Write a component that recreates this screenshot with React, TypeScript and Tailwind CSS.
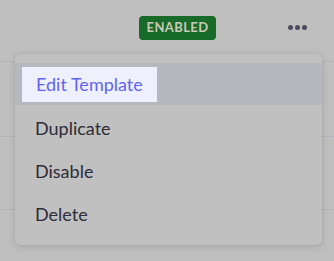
const ITEMS = ['Duplicate', 'Disable', 'Delete'];

export default function App() {
  return (
    <div
      className="relative w-[334px] h-[261px] overflow-hidden bg-[#bfbfbf]"
      style={{ fontFamily: 'Lato, "Open Sans", sans-serif' }}
    >
      {/* table rows behind the menu */}
      <div className="flex items-center h-[62px] pl-[139px] border-b border-[#b3b3c1]">
        <span className="mb-[6px] h-[24px] w-[77px] flex items-center justify-center rounded-[4px] bg-[#186a28] text-[13px] font-bold tracking-[0.03em] text-[#c9c9b6]">
          ENABLED
        </span>
        <div className="ml-[72px] mb-[6px] flex gap-[2px]">
          <span className="w-[5px] h-[5px] rounded-full bg-[#4b4b5c]" />
          <span className="w-[5px] h-[5px] rounded-full bg-[#4b4b5c]" />
          <span className="w-[5px] h-[5px] rounded-full bg-[#4b4b5c]" />
        </div>
      </div>
      <div className="h-[75px] border-b border-[#b3b3c1]" />
      <div className="h-[73px] border-b border-[#b3b3c1]" />

      {/* dropdown menu */}
      <div className="absolute left-[15px] top-[54px] w-[307px] rounded-[5px] bg-[#c0c0c0] pt-[9px] pb-[9px] shadow-[0_2px_8px_rgba(0,0,0,0.12),0_0_2px_rgba(0,0,0,0.08)]">
        <div className="h-[42px] bg-[#b6b7bf] flex items-center pl-[7px]">
          <span className="h-[35px] flex items-center px-[14px] bg-[#eff0fe] text-[18px] text-[#6264ee]">
            Edit Template
          </span>
        </div>
        <div className="pt-[2px]">
          {ITEMS.map((label) => (
            <div key={label} className="h-[43px] flex items-center pl-[20px] text-[18px] text-[#2c2c38]">
              {label}
            </div>
          ))}
        </div>
      </div>
    </div>
  );
}
